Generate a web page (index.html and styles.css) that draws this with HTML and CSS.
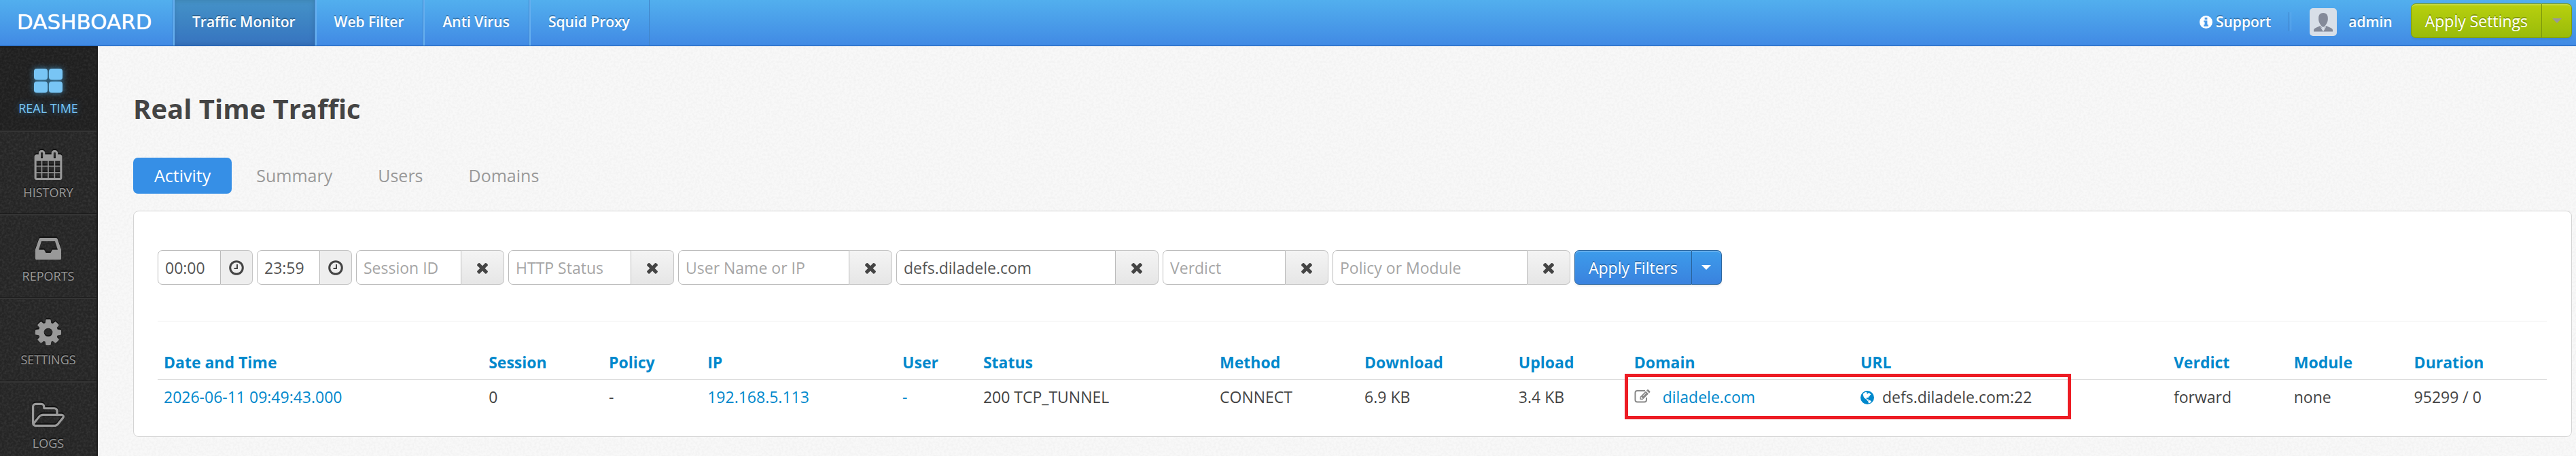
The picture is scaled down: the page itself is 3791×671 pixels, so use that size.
FILE: index.html
```html
<!DOCTYPE html>
<html lang="en">
<head>
    <meta charset="UTF-8">
    <title>Real Time Traffic</title>
    <link rel="stylesheet" href="styles.css">
</head>
<body>

<!-- shared icons -->
<svg class="sprite" aria-hidden="true">
    <symbol id="i-times" viewBox="0 0 1792 1792">
        <path d="M1490 1322q0 40-28 68l-136 136q-28 28-68 28t-68-28l-294-294-294 294q-28 28-68 28t-68-28l-136-136q-28-28-28-68t28-68l294-294-294-294q-28-28-28-68t28-68l136-136q28-28 68-28t68 28l294 294 294-294q28-28 68-28t68 28l136 136q28 28 28 68t-28 68l-294 294 294 294q28 28 28 68z"/>
    </symbol>
    <symbol id="i-clock" viewBox="0 0 22 22">
        <circle cx="11" cy="11" r="9.3" fill="none" stroke="currentColor" stroke-width="3"/>
        <path d="M11 6h2v7H7.500v-2H11z"/>
    </symbol>
</svg>

<header class="navbar">
    <a class="brand" href="#">DASHBOARD</a>
    <nav class="topnav">
        <a class="active" href="#">Traffic Monitor</a>
        <a href="#">Web Filter</a>
        <a href="#">Anti Virus</a>
        <a href="#">Squid Proxy</a>
    </nav>
    <div class="user-nav">
        <a class="support" href="#">
            <svg class="icon-info" viewBox="0 0 20 20">
                <circle cx="10" cy="10" r="10" fill="#fff"/>
                <path fill="#4a9ae9" d="M8 3h4v3H8zM6.500 7.500H12V14h1.500v2.500h-7V14H8v-4H6.500z"/>
            </svg>
            Support
        </a>
        <a class="account" href="#">
            <svg class="avatar" viewBox="0 0 40 41">
                <rect width="40" height="41" rx="5" fill="#d8dfe8"/>
                <path fill="#848a99" d="M20 7c4.500 0 7 3 6.800 7.500.5 5-2 9-4 11.500-1.500 2.300-4.100 2.300-5.600 0-2-2.500-4.500-6.500-4-11.500C13 10 15.500 7 20 7z"/>
                <path fill="#848a99" d="M6 34.500v-2c0-2 1.500-3 3.500-3.800l6-2.700 4.500 5 4.500-5 6 2.700c2 .8 3.500 1.800 3.500 3.800v2z"/>
                <path fill="#d8dfe8" d="M15.500 27l4.500 7.500 4.500-7.500-3 2.500h-3z"/>
            </svg>
            admin
        </a>
        <div class="btn-group">
            <button class="btn btn-green" type="button">Apply Settings</button>
            <button class="btn btn-green btn-caret" type="button" aria-label="More settings"><span class="caret"></span></button>
        </div>
    </div>
</header>

<div class="page">
    <nav class="sidebar">
        <a class="active" href="#">
            <svg viewBox="0 0 42 36">
                <rect width="20" height="16.500" rx="4"/>
                <rect x="22" width="20" height="16.500" rx="4"/>
                <rect y="19" width="20" height="16.500" rx="4"/>
                <rect x="22" y="19" width="20" height="16.500" rx="4"/>
            </svg>
            REAL TIME
        </a>
        <a href="#">
            <svg viewBox="64 0 1664 1792">
                <path d="M192 1664h288v-288h-288v288zm352 0h320v-288h-320v288zm-352-352h288v-320h-288v320zm352 0h320v-320h-320v320zm-352-384h288v-288h-288v288zm736 736h320v-288h-320v288zm-384-736h320v-288h-320v288zm768 736h288v-288h-288v288zm-384-352h320v-320h-320v320zm-352-864v-288q0-13-9.500-22.500t-22.500-9.500h-64q-13 0-22.500 9.500t-9.500 22.500v288q0 13 9.500 22.500t22.500 9.500h64q13 0 22.500-9.500t9.500-22.500zm736 864h288v-320h-288v320zm-384-384h320v-288h-320v288zm384 0h288v-288h-288v288zm32-480v-288q0-13-9.500-22.500t-22.500-9.500h-64q-13 0-22.500 9.500t-9.500 22.500v288q0 13 9.500 22.500t22.500 9.500h64q13 0 22.500-9.500t9.500-22.500zm384-64v1280q0 52-38 90t-90 38h-1408q-52 0-90-38t-38-90v-1280q0-52 38-90t90-38h128v-96q0-66 47-113t113-47h64q66 0 113 47t47 113v96h384v-96q0-66 47-113t113-47h64q66 0 113 47t47 113v96h128q52 0 90 38t38 90z"/>
            </svg>
            HISTORY
        </a>
        <a href="#">
            <svg viewBox="0 0 38 32">
                <path fill-rule="evenodd" d="M7.500 0h23Q32 0 32.600 1.500L38 17v13.500q0 1.500-1.500 1.500h-35Q0 32 0 30.500V17L5.400 1.500Q6 0 7.500 0zM9 5L5 17.500h8l2.500 4.500h7l2.500-4.500h8L29 5z"/>
            </svg>
            REPORTS
        </a>
        <a href="#">
            <svg viewBox="128 128 1536 1536">
                <path d="M1152 896q0-106-75-181t-181-75-181 75-75 181 75 181 181 75 181-75 75-181zm512-109v222q0 12-8 23t-20 13l-185 28q-19 54-39 91 35 50 107 138 10 12 10 25t-9 23q-27 37-99 108t-94 71q-12 0-26-9l-138-108q-44 23-91 38-16 136-29 186-7 28-36 28h-222q-14 0-24.500-8.500t-11.500-21.500l-28-184q-49-16-90-37l-141 107q-10 9-25 9-14 0-25-11-126-114-165-168-7-10-7-23 0-12 8-23 15-21 51-66.500t54-70.500q-27-50-41-99l-183-27q-13-2-21-12.500t-8-23.500v-222q0-12 8-23t19-13l186-28q14-46 39-92-40-57-107-138-10-12-10-24 0-10 9-23 26-36 98.500-107.500t94.500-71.500q13 0 26 10l138 107q44-23 91-38 16-136 29-186 7-28 36-28h222q14 0 24.500 8.500t11.500 21.500l28 184q49 16 90 37l142-107q9-9 24-9 13 0 25 10 129 119 165 170 7 8 7 22 0 12-8 23-15 21-51 66.500t-54 70.500q26 50 41 98l183 28q13 2 21 12.500t8 23.500z"/>
            </svg>
            SETTINGS
        </a>
        <a href="#">
            <svg viewBox="64 256 1909 1280">
                <path d="M1845 931q0-35-53-35h-1088q-40 0-85.500 21.500t-71.500 52.500l-294 363q-18 24-18 40 0 35 53 35h1088q40 0 86-22t71-53l294-363q18-22 18-39zm-1141-163h768v-160q0-40-28-68t-68-28h-576q-40 0-68-28t-28-68v-64q0-40-28-68t-68-28h-320q-40 0-68 28t-28 68v853l256-315q44-53 116-87.500t140-34.500zm1269 163q0 62-46 120l-295 363q-43 53-116 87.500t-140 34.500h-1088q-92 0-158-66t-66-158v-960q0-92 66-158t158-66h320q92 0 158 66t66 158v32h544q92 0 158 66t66 158v160h192q54 0 99 24.500t67 70.500q15 32 15 68z"/>
            </svg>
            LOGS
        </a>
    </nav>

    <main class="content">
        <h1>Real Time Traffic</h1>

        <nav class="pills">
            <a class="active" href="#">Activity</a>
            <a href="#">Summary</a>
            <a href="#">Users</a>
            <a href="#">Domains</a>
        </nav>

        <section class="box">
            <form class="filters">
                <div class="field time">
                    <input type="text" value="00:00" aria-label="From">
                    <span class="addon"><svg><use href="#i-clock"/></svg></span>
                </div>
                <div class="field time">
                    <input type="text" value="23:59" aria-label="To">
                    <span class="addon"><svg><use href="#i-clock"/></svg></span>
                </div>
                <div class="field session">
                    <input type="text" placeholder="Session ID" aria-label="Session ID">
                    <button type="button" aria-label="Clear"><svg><use href="#i-times"/></svg></button>
                </div>
                <div class="field status">
                    <input type="text" placeholder="HTTP Status" aria-label="HTTP Status">
                    <button type="button" aria-label="Clear"><svg><use href="#i-times"/></svg></button>
                </div>
                <div class="field user">
                    <input type="text" placeholder="User Name or IP" aria-label="User Name or IP">
                    <button type="button" aria-label="Clear"><svg><use href="#i-times"/></svg></button>
                </div>
                <div class="field domain">
                    <input type="text" value="defs.diladele.com" aria-label="Domain">
                    <button type="button" aria-label="Clear"><svg><use href="#i-times"/></svg></button>
                </div>
                <div class="field verdict">
                    <input type="text" placeholder="Verdict" aria-label="Verdict">
                    <button type="button" aria-label="Clear"><svg><use href="#i-times"/></svg></button>
                </div>
                <div class="field policy">
                    <input type="text" placeholder="Policy or Module" aria-label="Policy or Module">
                    <button type="button" aria-label="Clear"><svg><use href="#i-times"/></svg></button>
                </div>
                <div class="btn-group">
                    <button class="btn btn-blue" type="button">Apply Filters</button>
                    <button class="btn btn-blue btn-caret" type="button" aria-label="More filters"><span class="caret"></span></button>
                </div>
            </form>

            <hr>

            <div class="table-wrap">
                <table>
                    <colgroup>
                        <col class="c-date">
                        <col class="c-session">
                        <col class="c-policy">
                        <col class="c-ip">
                        <col class="c-user">
                        <col class="c-status">
                        <col class="c-method">
                        <col class="c-download">
                        <col class="c-upload">
                        <col class="c-domain">
                        <col class="c-url">
                        <col class="c-verdict">
                        <col class="c-module">
                        <col>
                    </colgroup>
                    <thead>
                    <tr>
                        <th><a href="#">Date and Time</a></th>
                        <th><a href="#">Session</a></th>
                        <th><a href="#">Policy</a></th>
                        <th><a href="#">IP</a></th>
                        <th><a href="#">User</a></th>
                        <th><a href="#">Status</a></th>
                        <th><a href="#">Method</a></th>
                        <th><a href="#">Download</a></th>
                        <th><a href="#">Upload</a></th>
                        <th><a href="#">Domain</a></th>
                        <th><a href="#">URL</a></th>
                        <th><a href="#">Verdict</a></th>
                        <th><a href="#">Module</a></th>
                        <th><a href="#">Duration</a></th>
                    </tr>
                    </thead>
                    <tbody>
                    <tr>
                        <td><a href="#">2026-06-11 09:49:43.000</a></td>
                        <td>0</td>
                        <td>-</td>
                        <td><a href="#">192.168.5.113</a></td>
                        <td><a href="#">-</a></td>
                        <td>200 TCP_TUNNEL</td>
                        <td>CONNECT</td>
                        <td>6.9 KB</td>
                        <td>3.4 KB</td>
                        <td>
                            <svg class="icon-edit" viewBox="0 0 24 20">
                                <path fill="none" stroke="#888" stroke-width="2" d="M16 2H4.500Q1.500 2 1.500 5v10.500q0 3 3 3h10.500q3 0 3-3V12"/>
                                <path fill="#888" d="M8.500 11L17 2.500l4 4L12.500 15h-4zM18 1.500l1-1q1-.8 2 0l2 2q.8 1 0 2l-1 1z"/>
                                <path fill="#fff" d="M10 11.500l1-.2.200 1.200 1.300.300-.300 1-1.200.200L9.500 12.500zM12.500 9.500l4.500-4.500.6.6-4.500 4.500z"/>
                            </svg>
                            <a href="#">diladele.com</a>
                        </td>
                        <td>
                            <svg class="icon-globe" viewBox="0 0 20 20">
                                <circle cx="10" cy="10" r="10" fill="#08c"/>
                                <path fill="#fff" d="M3.500 4.500L7 2l3 .5-1 1.500 1.500.5L12 3l2 1 1.500 2-2 .5.5 1.500-2 .5-.5 2-2-.5-1 1 1 1.500 2 0 .5 1.500-1.500 1-2-2.500-3-2L4.500 8.500z"/>
                                <path fill="#fff" d="M11 14.500l3-.5 2 1.500-1.500 2-2.500 1z"/>
                            </svg>
                            defs.diladele.com:22
                        </td>
                        <td>forward</td>
                        <td>none</td>
                        <td>95299 / 0</td>
                    </tr>
                    </tbody>
                </table>
                <div class="highlight"></div>
            </div>
        </section>
    </main>
</div>

</body>
</html>
```
FILE: styles.css
```css
* {
    box-sizing: border-box;
}

:root {
    /* paper grain */
    --grain: url("data:image/svg+xml,%3Csvg xmlns='http://www.w3.org/2000/svg' width='200' height='200'%3E%3Cfilter id='n' x='0' y='0' width='100%25' height='100%25'%3E%3CfeTurbulence type='fractalNoise' baseFrequency='.3' numOctaves='2' stitchTiles='stitch'/%3E%3CfeColorMatrix values='0 0 0 0 .5 0 0 0 0 .5 0 0 0 0 .5 .22 0 0 0 -.08'/%3E%3C/filter%3E%3Crect width='200' height='200' filter='url(%23n)'/%3E%3C/svg%3E");
}

body {
    margin: 0;
    font: 23px/32px "Open Sans", "Noto Sans", sans-serif;
    color: #444;
    min-height: 100vh;
    display: flex;
    flex-direction: column;
    background: #f8f8f8 var(--grain);
}

a {
    color: #08c;
    text-decoration: none;
}

button, input {
    font: inherit;
}

svg {
    fill: currentColor;
}

.sprite {
    display: none;
}

/* top bar */

.navbar {
    display: flex;
    height: 68px;
    background: linear-gradient(#52afee, #418ae4);
    border-bottom: 1px solid #1d5fb5;
}

.navbar a {
    color: #fff;
    font-weight: 600;
    font-size: 21px;
    line-height: 64px;
    text-shadow: 0 -2px 0 rgba(0, 0, 0, .25);
}

.navbar .brand {
    width: 254px;
    padding-left: 25px;
    font: 31px/64px "DejaVu Sans", sans-serif;
    text-shadow: 0 0 1px #fff;
}

.topnav {
    display: flex;
    border-left: 1px solid #4184c8;
}

.topnav a {
    padding: 0 28px;
    border-right: 1px solid #4184c8;
    box-shadow: inset 2px 0 0 #67b0f0;
}

.topnav .active {
    background: rgba(0, 0, 0, .16);
    box-shadow: inset 2px 0 0 #67b0f0, inset 0 0 8px rgba(0, 0, 0, .15);
}

.user-nav {
    display: flex;
    align-items: flex-start;
    margin-left: auto;
    padding-right: 6px;
}

.user-nav .support,
.user-nav .account {
    display: flex;
    align-items: center;
    height: 64px;
}

.user-nav .support {
    gap: 5px;
}

.icon-info {
    width: 19px;
    height: 19px;
}

.user-nav .account {
    gap: 17px;
    padding-right: 27px;
}

.user-nav .account::before {
    content: "";
    width: 2px;
    height: 28px;
    margin: 0 10px 0 26px;
    border-left: 1px solid #3f80c4;
    border-right: 1px solid #67b0f0;
}

.avatar {
    width: 40px;
    height: 41px;
}

.user-nav .btn-group {
    margin-top: 5px;
}

/* buttons */

.btn-group {
    display: flex;
}

.btn {
    height: 51px;
    padding: 0 20px;
    border: 1px solid;
    border-radius: 7px 0 0 7px;
    color: #fff;
    text-shadow: 0 -2px 0 rgba(0, 0, 0, .25);
    box-shadow: inset 0 2px 0 rgba(255, 255, 255, .2), 0 2px 3px rgba(0, 0, 0, .08);
}

.btn-green {
    background: linear-gradient(#b8d00e, #99bb0a);
    border-color: #7f9b0c;
}

.btn-blue {
    background: linear-gradient(#3d9ceb, #3a82de);
    border-color: #2b669f;
}

.btn-caret {
    display: flex;
    align-items: center;
    justify-content: center;
    width: 44px;
    padding: 0;
    border-left: 0;
    border-radius: 0 7px 7px 0;
}

.caret {
    border: 7px solid transparent;
    border-top-color: #fff;
    border-bottom: 0;
}

.btn-green .caret {
    border-top-color: #999;
}

/* sidebar */

.page {
    display: flex;
    flex: 1;
}

.sidebar {
    width: 144px;
    border-right: 2px solid #1c1c1c;
    background: #252525 var(--grain);
}

.sidebar a {
    display: grid;
    grid-template-rows: 44px 36px;
    align-items: center;
    justify-items: center;
    height: 123px;
    padding-top: 27px;
    border-top: 2px solid #353535;
    border-bottom: 1px solid #1a1a1a;
    color: #999;
    font-size: 18px;
    line-height: 36px;
    text-shadow: 0 -2px 0 #111;
}

.sidebar svg {
    width: 42px;
    height: 44px;
    filter: drop-shadow(0 -2px 0 #111);
}

.sidebar a:nth-child(3) svg,
.sidebar a:nth-child(4) svg {
    width: 38px;
}

.sidebar a:nth-child(5) svg {
    width: 48px;
}

.sidebar .active {
    height: 124px;
    background: rgba(0, 0, 0, .15);
    border-top-color: #1c1c1c;
    color: #78c5f5;
    text-shadow: 0 0 9px #2f7fb5;
}

.sidebar .active svg {
    filter: drop-shadow(0 0 5px #3a7ea8);
}

/* content */

.content {
    flex: 1;
    min-width: 0;
    padding: 62px 6px 28px 52px;
}

h1 {
    margin: 0 0 42px;
    font-size: 40px;
    line-height: 60px;
}

.pills {
    display: flex;
    gap: 5px;
    margin-bottom: 25px;
}

.pills a {
    padding: 0 31px;
    border-radius: 7px;
    color: #999;
    font-size: 25px;
    line-height: 53px;
}

.pills .active {
    background: #368fe6;
    color: #fff;
}

.box {
    padding: 57px 36px 33px 35px;
    background: #fff;
    border: 1px solid #d4d4d4;
    border-radius: 8px;
}

.filters {
    display: flex;
    gap: 6px;
}

.field {
    display: flex;
    height: 51px;
}

.field input {
    flex: 1;
    min-width: 0;
    padding: 0 10px;
    border: 1px solid #bbb;
    border-radius: 7px 0 0 7px;
    color: #555;
    background: #fff;
}

.field input::placeholder {
    color: #a5a5a5;
}

.addon,
.field button {
    display: flex;
    align-items: center;
    justify-content: center;
    width: 47px;
    padding: 0;
    border: 1px solid #c4c4c4;
    border-left: 0;
    border-radius: 0 7px 7px 0;
    background: #eee;
    color: #444;
}

.field button {
    width: 63px;
    background: linear-gradient(#f4f4f4, #e6e6e6);
}

.addon svg {
    width: 22px;
    height: 22px;
}

.field button svg {
    width: 24px;
    height: 24px;
}

.time {
    width: 140px;
}

.session {
    width: 218px;
}

.status {
    width: 244px;
}

.user {
    width: 315px;
}

.domain {
    width: 386px;
}

.verdict {
    width: 244px;
}

.policy {
    width: 350px;
}

hr {
    margin: 53px 0 35px;
    border: 0;
    border-top: 1px solid #eee;
}

.table-wrap {
    position: relative;
}

table {
    width: 100%;
    table-layout: fixed;
    border-collapse: collapse;
}

th, td {
    padding: 9px;
    text-align: left;
    white-space: nowrap;
}

td {
    border-top: 1px solid #ddd;
}

.c-date {
    width: 13.6%;
}

.c-session,
.c-verdict,
.c-module {
    width: 5.03%;
}

.c-policy {
    width: 4.13%;
}

.c-ip {
    width: 8.16%;
}

.c-user {
    width: 3.38%;
}

.c-status {
    width: 9.9%;
}

.c-method {
    width: 6.06%;
}

.c-download {
    width: 6.45%;
}

.c-upload {
    width: 4.83%;
}

.c-domain {
    width: 9.48%;
}

.c-url {
    width: 13.11%;
}

.icon-edit {
    width: 24px;
    height: 20px;
    margin-right: 12px;
}

.icon-globe {
    width: 20px;
    height: 20px;
    margin-right: 6px;
    vertical-align: -2px;
}

/* marks the domain and url cells */
.highlight {
    position: absolute;
    top: 42px;
    left: 61.4%;
    width: 18.7%;
    height: 67px;
    border: 5px solid #ed1c24;
}
```
